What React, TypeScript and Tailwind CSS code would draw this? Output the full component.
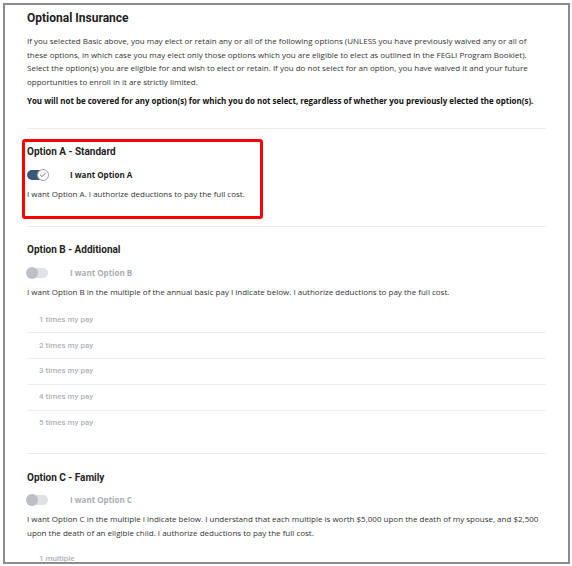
import { Check } from "lucide-react";

const body = "font-['Open_Sans',sans-serif]";
const head = "font-['Roboto',sans-serif]";

const Toggle = ({ on }: { on: boolean }) => {
  if (on) {
    return (
      <div className="relative w-[21px] h-[10px] rounded-full bg-[#3b5878] flex items-center">
        <div className="absolute right-[-1px] w-[12px] h-[12px] rounded-full bg-white border border-[#9aa4b0] flex items-center justify-center">
          <Check className="w-[8px] h-[8px] text-[#6b7785]" strokeWidth={3} />
        </div>
      </div>
    );
  }
  return (
    <div className="relative w-[21px] h-[10px] rounded-full bg-[#dfe1e4] flex items-center">
      <div className="absolute left-[-1px] w-[12px] h-[12px] rounded-full bg-[#bcc0c5]" />
    </div>
  );
};

const OptionHeader = ({
  title,
  label,
  on,
  tight = false,
}: {
  title: string;
  label: string;
  on: boolean;
  tight?: boolean;
}) => (
  <>
    <h3 className={`${head} text-[10px] leading-[14px] font-bold text-[#1e1e1e]`}>{title}</h3>
    <div className={`flex items-center h-[14px] ${tight ? "mt-[8px]" : "mt-[9px]"}`}>
      <Toggle on={on} />
      <span
        className={`${body} ml-[22px] text-[8px] font-bold ${on ? "text-[#222]" : "text-[#a9adb2]"}`}
      >
        {label}
      </span>
    </div>
  </>
);

export default function App() {
  const pays = [1, 2, 3, 4, 5];

  return (
    <div className="w-[572px] h-[566px] bg-white p-[3px]">
      <div className="h-[561px] w-[567px] border-2 border-[#8c8c8c] overflow-hidden px-[22px] pt-[5px] text-[#333]">
        <h2 className={`${head} text-[12px] leading-[16px] font-bold text-[#1e1e1e]`}>Optional Insurance</h2>
        <p className={`${body} text-[8px] leading-[13.5px] mt-[8px]`}>
          If you selected Basic above, you may elect or retain any or all of the following options (UNLESS you have
          previously waived any or all of these options, in which case you may elect only those options which you are
          eligible to elect as outlined in the FEGLI Program Booklet). Select the option(s) you are eligible for and
          wish to elect or retain. If you do not select for an option, you have waived it and your future
          opportunities to enroll in it are strictly limited.
        </p>
        <p className={`${body} text-[7.95px] leading-[13.5px] font-bold text-[#111] mt-[7px]`}>
          You will not be covered for any option(s) for which you do not select, regardless of whether you previously
          elected the option(s).
        </p>

        <div className="border-t border-[#ececec] mt-[19px]" />

        {/* Option A */}
        <div className="relative pt-[16px] pb-[26px] border-b border-[#ececec]">
          <div className="absolute left-[-5px] top-[10px] w-[241px] h-[80px] border-[3px] border-[#ff0000] rounded-[3px]" />
          <OptionHeader title="Option A - Standard" label="I want Option A" on />
          <p className={`${body} text-[8px] leading-[13.5px] mt-[5px]`}>
            I want Option A. I authorize deductions to pay the full cost.
          </p>
        </div>

        {/* Option B */}
        <div className="pt-[16px] pb-[17px] border-b border-[#ececec]">
          <OptionHeader title="Option B - Additional" label="I want Option B" on={false} />
          <p className={`${body} text-[8px] leading-[13.5px] mt-[5px]`}>
            I want Option B in the multiple of the annual basic pay I indicate below. I authorize deductions to pay the
            full cost.
          </p>
          <ul className="mt-[9px]">
            {pays.map((n, i) => (
              <li
                key={n}
                className={`h-[25.75px] flex items-center pl-[12px] ${head} text-[8px] font-medium text-[#b0b3b7] ${
                  i < pays.length - 1 ? "border-b border-[#efefef]" : ""
                }`}
              >
                {n} times my pay
              </li>
            ))}
          </ul>
        </div>

        {/* Option C */}
        <div className="pt-[17px]">
          <OptionHeader title="Option C - Family" label="I want Option C" on={false} tight />
          <p className={`${body} text-[8px] leading-[13.5px] mt-[5px]`}>
            I want Option C in the multiple I indicate below. I understand that each multiple is worth $5,000 upon the
            death of my spouse, and $2,500 upon the death of an eligible child. I authorize deductions to pay the full
            cost.
          </p>
          <ul className="mt-[7px]">
            <li className={`h-[25.75px] flex items-center pl-[12px] ${head} text-[8px] font-medium text-[#b0b3b7]`}>
              1 multiple
            </li>
          </ul>
        </div>
      </div>
    </div>
  );
}
